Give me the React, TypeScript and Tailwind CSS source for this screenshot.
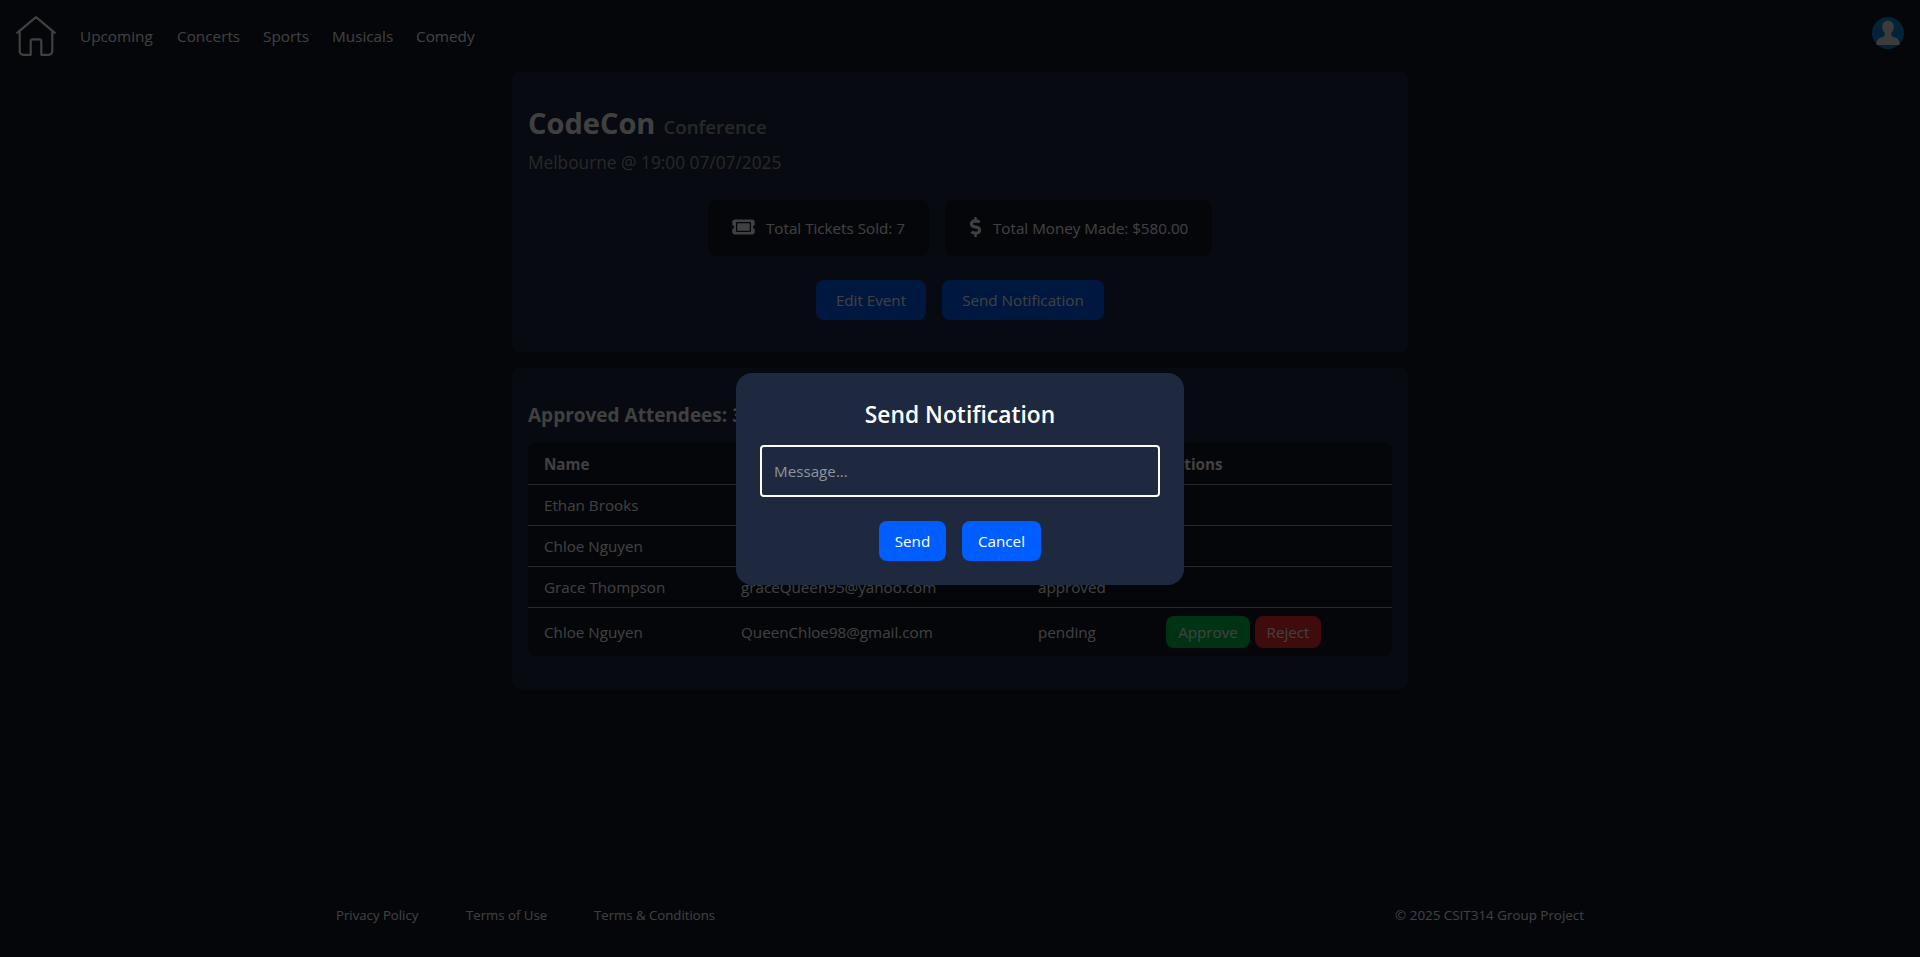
import { ReactNode } from "react";
import { FaDollarSign } from "react-icons/fa";
import { FaTicket } from "react-icons/fa6";

const nav = [
  { label: "Upcoming", width: "w-[73px]" },
  { label: "Concerts", width: "w-[62px]" },
  { label: "Sports", width: "w-[45px]" },
  { label: "Musicals", width: "w-[60px]" },
  { label: "Comedy", width: "w-[60px]" },
];

const attendees = [
  { name: "Ethan Brooks", email: "ethanbrooks@gmail.com", status: "approved" },
  { name: "Chloe Nguyen", email: "chloe.n@gmail.com", status: "approved" },
  { name: "Grace Thompson", email: "graceQueen95@yahoo.com", status: "approved" },
  { name: "Chloe Nguyen", email: "QueenChloe98@gmail.com", status: "pending" },
];

function HomeIcon() {
  return (
    <svg
      className="block size-10"
      viewBox="0 0 40 40"
      fill="none"
      stroke="currentColor"
      strokeWidth="2.2"
      strokeLinecap="round"
      strokeLinejoin="round"
    >
      <path d="M1.200 16.800 20 1.200l18.800 15.600" />
      <path d="M3.700 15v20.200a3.600 3.600 0 0 0 3.600 3.600H14.700V25.600a2.200 2.200 0 0 1 2.200-2.200h6.200a2.200 2.200 0 0 1 2.200 2.200v13.200h7.400a3.600 3.600 0 0 0 3.600-3.600V15" />
    </svg>
  );
}

function Avatar() {
  return (
    <svg className="block size-8" viewBox="0 0 32 32">
      <circle cx="16" cy="16" r="16" fill="#0e8ee0" />
      <path
        fill="#f0f0f0"
        d="M16 3.700c3.500 0 5.800 2.300 5.800 5.700 0 2.600-1 4.900-2.500 6.300v2.400c0 .9.500 1.400 1.500 1.700l3.200 1.100c2 .7 3.200 2.500 3.400 5.100v2H4.600v-2c.2-2.600 1.400-4.400 3.400-5.100l3.200-1.100c1-.3 1.500-.8 1.500-1.700v-2.400c-1.500-1.400-2.500-3.700-2.500-6.300 0-3.400 2.300-5.700 5.800-5.700z"
      />
    </svg>
  );
}

function Stat({ icon, width, children }: { icon: ReactNode; width: string; children: ReactNode }) {
  return (
    <div className={`flex h-14 items-center gap-[11px] whitespace-nowrap rounded-lg bg-gray-900 pl-6 ${width}`}>
      {icon}
      <span>{children}</span>
    </div>
  );
}

function Button({ width, children }: { width: string; children: ReactNode }) {
  return (
    <button className={`h-10 whitespace-nowrap rounded-lg bg-[#005dff] text-center text-white ${width}`}>
      {children}
    </button>
  );
}

export default function App() {
  return (
    <div className="relative flex h-[957px] flex-col overflow-hidden bg-gray-900 font-['Open_Sans',sans-serif] text-[15.200px] leading-6 text-white">
      <header className="flex h-[72px] shrink-0 items-center justify-between px-4">
        <div className="flex items-center gap-6">
          <HomeIcon />
          <nav className="flex gap-6 text-[15.300px]">
            {nav.map((item) => (
              <a key={item.label} className={`whitespace-nowrap ${item.width}`}>
                {item.label}
              </a>
            ))}
          </nav>
        </div>
        <div className="mb-[6px]">
          <Avatar />
        </div>
      </header>

      <main className="mx-auto flex w-[896px] flex-1 flex-col gap-4">
        <section className="flex h-[280px] flex-col rounded-lg bg-[#1e2940] px-4 pt-[31px]">
          <h1 className="flex h-10 items-baseline gap-2 text-[29px] font-bold leading-10">
            CodeCon
            <span className="text-[18.700px] font-semibold text-[#a1a1a1]">Conference</span>
          </h1>
          <p className="mt-[6px] text-[17.300px] leading-7 text-[#a1a1a1]">Melbourne @ 19:00 07/07/2025</p>
          <div className="mt-[23px] flex justify-center gap-4">
            <Stat width="w-[221px]" icon={<FaTicket className="-mt-[2px] h-5 w-[23px]" />}>
              Total Tickets Sold: 7
            </Stat>
            <Stat width="w-[267px]" icon={<FaDollarSign className="-mt-[2px] h-5 w-[13px]" />}>
              Total Money Made: $580.00
            </Stat>
          </div>
          <div className="mt-6 flex justify-center gap-4">
            <Button width="w-[110px]">Edit Event</Button>
            <Button width="w-[162px]">Send Notification</Button>
          </div>
        </section>

        <section className="h-[320.500px] rounded-lg bg-[#1e2940] px-4 pt-[33px]">
          <h2 className="mb-[14px] text-[19px] font-bold leading-7">Approved Attendees: 3</h2>
          <table className="w-full table-fixed overflow-hidden rounded-lg bg-gray-900 text-left">
            <colgroup>
              <col className="w-[197px]" />
              <col className="w-[297px]" />
              <col className="w-[128px]" />
              <col />
            </colgroup>
            <thead>
              <tr className="h-[41px] border-b border-gray-400 font-bold">
                <th className="px-4 pt-[2px]">Name</th>
                <th className="px-4 pt-[2px]">Email</th>
                <th className="px-4 pt-[2px]">Status</th>
                <th className="px-4 pt-[2px]">Actions</th>
              </tr>
            </thead>
            <tbody>
              {attendees.map((a) => (
                <tr key={a.email} className="h-[41px] border-b border-gray-400 last:h-[49px] last:border-b-0">
                  <td className="px-4">{a.name}</td>
                  <td className="px-4">{a.email}</td>
                  <td className="px-4">{a.status}</td>
                  <td className="px-4">
                    {a.status === "pending" && (
                      <div className="flex gap-[5px]">
                        <button className="h-8 w-[84px] rounded-lg bg-[#00c950]">Approve</button>
                        <button className="h-8 w-[66px] rounded-lg bg-[#fb2c36]">Reject</button>
                      </div>
                    )}
                  </td>
                </tr>
              ))}
            </tbody>
          </table>
        </section>
      </main>

      <footer className="mx-auto flex h-[83px] w-[1248px] shrink-0 items-center justify-between whitespace-nowrap pb-[2px] text-[13.200px]">
        <div className="flex">
          <a className="w-[130px]">Privacy Policy</a>
          <a className="w-[128px]">Terms of Use</a>
          <a>Terms &amp; Conditions</a>
        </div>
        <span className="text-[13.400px]">© 2025 CSIT314 Group Project</span>
      </footer>

      <div className="absolute inset-0 flex items-center justify-center bg-black/75">
        <div className="h-[212px] w-[448px] rounded-2xl bg-[#1e2940] px-6 pb-6 pt-[26px]">
          <h2 className="mb-[14px] text-center text-[22.800px] font-semibold leading-8">Send Notification</h2>
          <input
            className="mb-6 block h-[52px] w-full rounded border-2 border-white bg-transparent px-3 placeholder:text-[#8e949f]"
            placeholder="Message..."
          />
          <div className="flex justify-center gap-4">
            <Button width="w-[67px]">Send</Button>
            <Button width="w-[79px]">Cancel</Button>
          </div>
        </div>
      </div>
    </div>
  );
}
